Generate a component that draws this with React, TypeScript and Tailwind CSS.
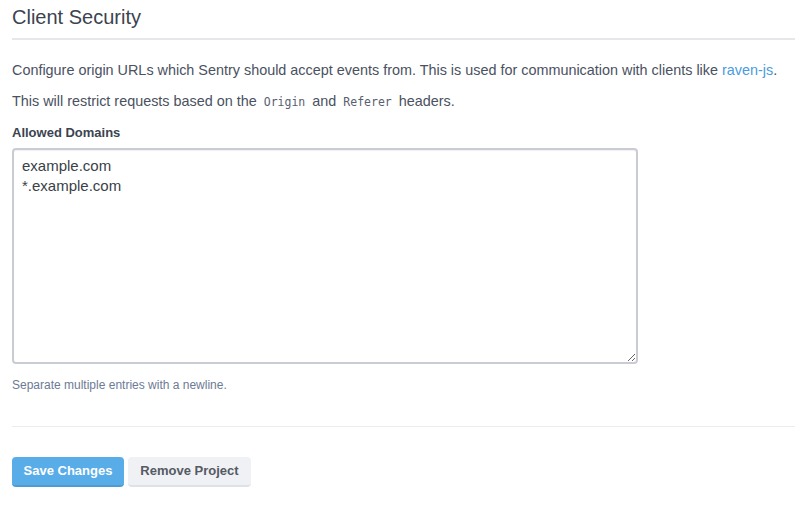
import React from 'react';

// Client Security settings panel — origin allow-list form
export default function App() {
  return (
    <div className="min-h-screen bg-white pl-3 pt-[5px] font-['Liberation_Sans',Arial,sans-serif] text-[#4a5161]">
      <h3 className="border-b-2 border-[#e6e7ea] pb-[9px] text-[20px] leading-6 text-[#3c4350]">
        Client Security
      </h3>

      <p className="mt-5 text-[14.4px] leading-5">
        Configure origin URLs which Sentry should accept events from. This is used for communication with clients like{' '}
        <a href="#" className="text-[#4a9be0]">raven-js</a>.
      </p>
      <p className="mt-[11px] text-[14.4px] leading-5">
        This will restrict requests based on the{' '}
        <code className="px-[3px] font-['DejaVu_Sans_Mono',monospace] text-[11.5px] text-[#596070]">Origin</code> and{' '}
        <code className="px-[3px] font-['DejaVu_Sans_Mono',monospace] text-[11.5px] text-[#596070]">Referer</code>{' '}
        headers.
      </p>

      <label className="mt-3 block text-[13px] font-bold leading-[18px] text-[#3c4350]">Allowed Domains</label>
      <textarea
        className="mt-[6px] block h-[216px] w-[626px] rounded-[4px] border-2 border-[#c9ccd3] px-2 pt-[6px] text-[15px] leading-5 text-[#3a3f48] shadow-[inset_0_1px_1px_rgba(0,0,0,0.06)] outline-none"
        defaultValue={'example.com\n*.example.com'}
      />
      <p className="mt-[13px] text-[12px] leading-4 text-[#6c7b95]">Separate multiple entries with a newline.</p>

      <div className="mt-[33px] border-t border-[#eaecef]" />

      <div className="mt-[30px] flex gap-1">
        <button className="h-[30px] w-[112px] rounded-[4px] border-b-2 border-[#4f9bd2] bg-[#58ade8] text-[13px] font-bold text-white">
          Save Changes
        </button>
        <button className="h-[30px] w-[123px] rounded-[4px] border-b-2 border-[#dde1e8] bg-[#eff1f5] text-[13px] font-bold text-[#555a63]">
          Remove Project
        </button>
      </div>
    </div>
  );
}
